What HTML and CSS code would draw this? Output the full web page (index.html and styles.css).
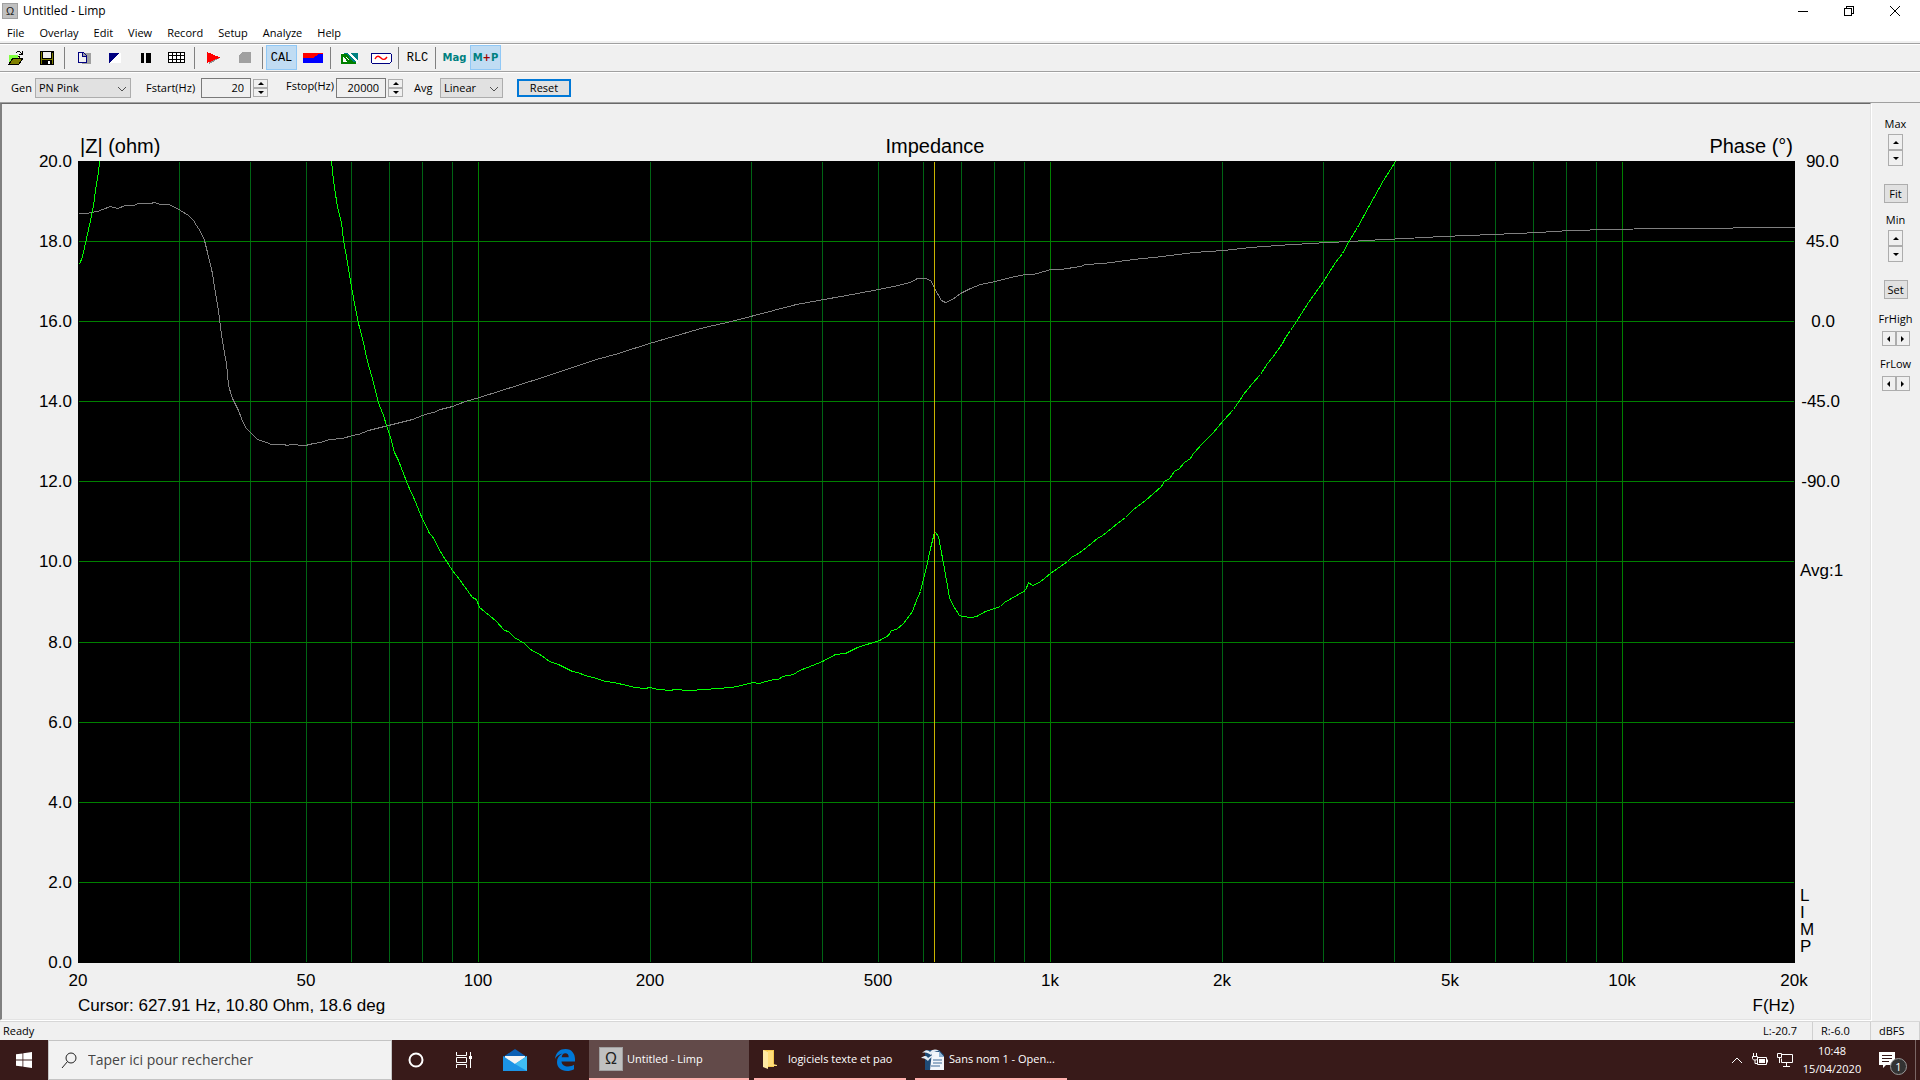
FILE: index.html
```
<!DOCTYPE html>
<html lang="en">
<head>
    <meta charset="UTF-8">
    <meta name="viewport" content="width=device-width, initial-scale=1.0">
    <title>Untitled - Limp</title>
    <link rel="stylesheet" href="styles.css">
</head>
<body>
    <header class="titlebar">
        <span class="app-icon">Ω</span>
        <span class="title">Untitled - Limp</span>
        <div class="window-buttons">
            <button aria-label="Minimize"><svg width="12" height="12"><path d="M1 6.500h10"/></svg></button>
            <button aria-label="Restore"><svg width="12" height="12"><path d="M1.500 3.500h7v7h-7zM3.500 3.500v-2h7v7h-2"/></svg></button>
            <button aria-label="Close"><svg width="12" height="12" class="smooth"><path d="M1 1l10 10M11 1L1 11"/></svg></button>
        </div>
    </header>

    <nav class="menu">
        <button>File</button>
        <button>Overlay</button>
        <button>Edit</button>
        <button>View</button>
        <button>Record</button>
        <button>Setup</button>
        <button>Analyze</button>
        <button>Help</button>
    </nav>

    <div class="toolbar">
        <button aria-label="Open">
            <svg width="16" height="14"><path d="M1 13V4h4l1 1h5v3" fill="#ffff80" stroke="#000"/><path d="M1 4h9v9H1z" fill="#80ff40"/><path d="M1 13l4-6h10l-4 6z" fill="#808000" stroke="#000"/><path d="M8 2c2-2 4-2 6 1m0-3v3h-3" fill="none" stroke="#000"/></svg>
        </button>
        <button aria-label="Save">
            <svg width="14" height="14"><path d="M0 0h14v14H0z" fill="#000"/><path d="M1 1h1v12H1zM12 2h1v11h-1zM2 8h10v1H2z" fill="#808000"/><path d="M3 1h8v6H3z" fill="#f0f0f0"/><path d="M8 10h2v3H8z" fill="#fff"/></svg>
        </button>
        <span class="sep"></span>
        <button aria-label="Copy">
            <svg width="14" height="13"><path d="M5 2h9v11H5z" fill="#a0a0a0"/><path d="M1 1h5l3 3v7H1zM5 1v4h4" fill="#f0f0f0" stroke="#000080"/></svg>
        </button>
        <button aria-label="Invert colors">
            <svg width="12" height="10"><path d="M0 0h12v10H0z" fill="#fff"/><path d="M0 0h11L0 10z" fill="#000080"/></svg>
        </button>
        <button aria-label="Line width">
            <svg width="10" height="10"><path d="M0 0h3v10H0zM5 0h5v10H5z" fill="#000"/></svg>
        </button>
        <button aria-label="Grid">
            <svg width="17" height="11"><path d="M0 0h17v11H0z" fill="#000"/><path d="M1 1h3v2H1zM5 1h3v2H5zM9 1h3v2H9zM13 1h3v2h-3zM1 4h3v3H1zM5 4h3v3H5zM9 4h3v3H9zM13 4h3v3h-3zM1 8h3v2H1zM5 8h3v2H5zM9 8h3v2H9zM13 8h3v2h-3z" fill="#fff"/></svg>
        </button>
        <span class="sep"></span>
        <button aria-label="Start recording">
            <svg width="14" height="12"><path d="M2 12V1l11 5z" fill="#909090"/><path d="M0 0l13 5.500L0 11z" fill="#f00"/></svg>
        </button>
        <button aria-label="Stop">
            <svg width="12" height="11"><path d="M3 0h9v11H0V3z" fill="#a0a0a0"/></svg>
        </button>
        <span class="sep"></span>
        <button class="mono on">CAL</button>
        <button aria-label="Overlay level">
            <svg width="20" height="10"><path d="M0 0h20v10H0z" fill="#00f"/><path d="M0 0h20v1h-4l-3 2-3 2H0z" fill="#f00"/></svg>
        </button>
        <span class="sep"></span>
        <button aria-label="Overlay set">
            <svg width="17" height="12"><path d="M0 1h17v10H0z" fill="#fff"/><path d="M3 1h4l8 9h-4zM9 1h8v8z" fill="#008080"/><path d="M1 2v9h14M1 2l8 9M4 2l8 9" fill="none" stroke="#008000" stroke-width="2"/></svg>
        </button>
        <button aria-label="Generator setup">
            <svg width="22" height="12"><rect x="1" y="1" width="20" height="10" rx="1" fill="#fff" stroke="#000080" stroke-width="1"/><path class="smooth" d="M5 7c2-4 4-3 6-1s4 2 6-1" fill="none" stroke="#f00" stroke-width="1.400"/></svg>
        </button>
        <span class="sep"></span>
        <button class="mono">RLC</button>
        <span class="sep"></span>
        <button class="mag">Mag</button>
        <button class="mag on">M<b>+</b>P</button>
    </div>

    <div class="controls">
        <label class="lbl-gen" for="gen">Gen</label>
        <span class="combo gen">
            <select id="gen"><option>PN Pink</option></select>
            <svg width="10" height="6"><path d="M1 1l4 4 4-4"/></svg>
        </span>
        <label class="lbl-start" for="fstart">Fstart(Hz)</label>
        <input id="fstart" type="text" value="20">
        <span class="spin">
            <button aria-label="Fstart up"><i class="up"></i></button>
            <button aria-label="Fstart down"><i class="down"></i></button>
        </span>
        <label class="lbl-stop" for="fstop">Fstop(Hz)</label>
        <input id="fstop" type="text" value="20000">
        <span class="spin">
            <button aria-label="Fstop up"><i class="up"></i></button>
            <button aria-label="Fstop down"><i class="down"></i></button>
        </span>
        <label class="lbl-avg" for="avg">Avg</label>
        <span class="combo avg">
            <select id="avg"><option>Linear</option></select>
            <svg width="10" height="6"><path d="M1 1l4 4 4-4"/></svg>
        </span>
        <button class="reset">Reset</button>
    </div>

    <main>
        <section class="chart">
            <svg viewBox="0 0 1868 915" role="img" aria-label="Impedance">
                <g class="heading">
                    <text x="78" y="49">|Z| (ohm)</text>
                    <text x="933" y="49" text-anchor="middle">Impedance</text>
                    <text x="1791" y="49" text-anchor="end">Phase (°)</text>
                </g>

                <g transform="translate(76 57)">
                    <rect width="1717" height="802"/>
                    <!-- minor frequency lines -->
                    <path class="minor" d="M101.500 1v800M172.500 1v800M228.500 1v800M273.500 1v800M311.500 1v800M344.500 1v800M374.500 1v800M572.500 1v800M673.500 1v800M744.500 1v800M800.500 1v800M845.500 1v800M883.500 1v800M916.500 1v800M946.500 1v800M1144.500 1v800M1245.500 1v800M1316.500 1v800M1372.500 1v800M1417.500 1v800M1455.500 1v800M1488.500 1v800M1518.500 1v800"/>
                    <!-- decades and ohm lines -->
                    <path class="major" d="M400.500 1v800M972.500 1v800M1544.500 1v800M1 80.500h1715M1 160.500h1715M1 240.500h1715M1 320.500h1715M1 400.500h1715M1 481.500h1715M1 561.500h1715M1 641.500h1715M1 721.500h1715"/>
                    <g transform="translate(.5 .5)">
                        <polyline class="phase" points="0,52 9,52 12,51 19,50 24,48 32,45 39,47 47,44 55,44 60,42 72,42 76,41 82,43 90,43 97,46 102,49 110,54 115,59 118,64 122,70 126,79 129,91 134,112 137,132 140,149 142,166 145,186 148,202 150,224 154,237 160,249 163,257 167,266 173,272 179,278 188,281 193,283 205,283 209,284 212,283 227,284 235,282 242,281 251,278 264,277 274,274 280,273 290,269 302,266 310,264 322,261 334,258 344,254 350,252 355,251 362,248 374,245 387,240 401,236 461,217 518,198 540,192 571,182 626,166 653,160 718,143 779,132 800,128 815,125 832,121 839,117 848,117 853,120 856,127 863,139 867,141 874,138 882,132 892,127 902,123 917,120 932,116 947,113 954,113 959,112 972,108 982,108 1002,105 1007,103 1025,102 1055,98 1084,95 1115,91 1145,89 1172,86 1199,84 1215,83 1249,81 1272,80 1287,79 1327,77 1364,75 1414,73 1460,71 1492,69 1532,68 1579,67 1654,67 1655,66 1716,66"/>
                        <polyline class="imp" points="1,103 4,95 8,77 12,59 15,44 17,29 20,11 21,0"/>
                        <polyline class="imp" points="253,0 255,19 259,46 263,61 265,79 269,101 273,126 277,147 280,162 285,181 288,196 291,207 294,217 298,234 301,244 305,254 309,267 312,276 316,291 320,299 325,312 330,325 336,338 342,353 351,372 354,375 363,392 374,409 381,418 394,436 398,438 401,446 406,450 417,459 426,469 430,470 436,476 446,482 452,488 463,494 471,500 480,503 494,510 499,511 507,514 518,517 527,520 535,521 549,524 556,526 567,527 571,526 580,528 592,529 596,528 610,529 628,528 638,527 653,526 663,524 674,521 681,522 687,520 696,518 700,518 704,515 715,513 721,509 729,506 744,500 757,493 767,492 779,486 801,479 810,474 813,469 818,468 825,462 834,450 838,439 842,430 846,414 849,401 852,387 856,371 857,371 860,375 862,386 865,402 868,419 871,436 874,443 881,454 884,455 893,456 898,455 907,450 922,445 926,441 947,429 950,421 954,424 961,421 972,412 989,400 993,396 1000,392 1008,386 1019,377 1024,374 1033,367 1039,362 1047,356 1055,348 1067,339 1075,332 1083,325 1086,320 1091,317 1096,310 1101,307 1106,301 1112,297 1115,292 1124,282 1134,272 1145,259 1155,248 1159,242 1162,238 1165,233 1174,222 1182,213 1189,202 1194,196 1204,182 1207,176 1212,169 1218,160 1230,141 1245,120 1257,101 1264,92 1271,79 1279,66 1285,55 1295,37 1305,19 1312,8 1317,0"/>
                    </g>
                    <path class="cursor" d="M856.500 1v800"/>
                </g>

                <g text-anchor="end">
                    <text x="70" y="63">20.0</text>
                    <text x="70" y="143">18.0</text>
                    <text x="70" y="223">16.0</text>
                    <text x="70" y="303">14.0</text>
                    <text x="70" y="383">12.0</text>
                    <text x="70" y="463">10.0</text>
                    <text x="70" y="544">8.0</text>
                    <text x="70" y="624">6.0</text>
                    <text x="70" y="704">4.0</text>
                    <text x="70" y="784">2.0</text>
                    <text x="70" y="864">0.0</text>
                </g>
                <g text-anchor="end">
                    <text x="1837" y="63">90.0</text>
                    <text x="1837" y="143">45.0</text>
                    <text x="1833" y="223">0.0</text>
                    <text x="1838" y="303">-45.0</text>
                    <text x="1838" y="383">-90.0</text>
                </g>
                <g>
                    <text x="1798" y="472">Avg:1</text>
                    <text x="1798" y="797">L</text>
                    <text x="1798" y="814">I</text>
                    <text x="1798" y="831">M</text>
                    <text x="1798" y="848">P</text>
                </g>
                <g text-anchor="middle">
                    <text x="76" y="882">20</text>
                    <text x="304" y="882">50</text>
                    <text x="476" y="882">100</text>
                    <text x="648" y="882">200</text>
                    <text x="876" y="882">500</text>
                    <text x="1048" y="882">1k</text>
                    <text x="1220" y="882">2k</text>
                    <text x="1448" y="882">5k</text>
                    <text x="1620" y="882">10k</text>
                    <text x="1792" y="882">20k</text>
                </g>
                <text x="76" y="907">Cursor: 627.91 Hz, 10.80 Ohm, 18.6 deg</text>
                <text x="1793" y="907" text-anchor="end">F(Hz)</text>
            </svg>
        </section>

        <aside class="scale">
            <span>Max</span>
            <div class="spin tall">
                <button aria-label="Max up"><i class="up"></i></button>
                <button aria-label="Max down"><i class="down"></i></button>
            </div>
            <button class="small">Fit</button>
            <span>Min</span>
            <div class="spin tall">
                <button aria-label="Min up"><i class="up"></i></button>
                <button aria-label="Min down"><i class="down"></i></button>
            </div>
            <button class="small">Set</button>
            <span class="freq">FrHigh</span>
            <div class="spin wide">
                <button aria-label="High frequency down"><i class="left"></i></button>
                <button aria-label="High frequency up"><i class="right"></i></button>
            </div>
            <span>FrLow</span>
            <div class="spin wide">
                <button aria-label="Low frequency down"><i class="left"></i></button>
                <button aria-label="Low frequency up"><i class="right"></i></button>
            </div>
        </aside>
    </main>

    <div class="status">
        <span class="ready">Ready</span>
        <span class="level">L:-20.7</span>
        <span class="level">R:-6.0</span>
        <span class="unit">dBFS</span>
    </div>

    <footer class="taskbar">
        <button class="start" aria-label="Start">
            <svg width="16" height="16"><path d="M0 2.300l6.500-.9v6.200H0zM7.300 1.300L16 0v7.600H7.300zM0 8.400h6.500v6.200L0 13.700zM7.300 8.400H16V16l-8.700-1.300z" fill="#fff"/></svg>
        </button>
        <div class="search">
            <svg width="16" height="17"><circle cx="10" cy="6" r="5"/><path d="M6.500 9.500L1 16"/></svg>
            <input type="text" aria-label="Search" placeholder="Taper ici pour rechercher">
        </div>
        <button class="icon" aria-label="Cortana">
            <svg width="16" height="16"><circle cx="8" cy="8" r="6.500" fill="none" stroke="#fff" stroke-width="2"/></svg>
        </button>
        <button class="icon" aria-label="Task view">
            <svg width="16" height="16"><path d="M.5 0v3.500h10V0M.5 16v-3.500h10V16M.5 5.500h10v5H.5zM14.500 0v16" fill="none" stroke="#fff"/><path d="M13 4h3v3h-3z" fill="#fff"/></svg>
        </button>
        <button class="mail" aria-label="Mail">
            <svg width="24" height="22"><path d="M0 8L12 0l12 8v5H0z" fill="#0a5fb4"/><path d="M2 7h20v8H2z" fill="#f4f4f4"/><path d="M0 7l12 8 12-8v15H0z" fill="#1c94e6"/><path d="M24 7v15L12 15z" fill="#40bdf2"/></svg>
        </button>
        <button class="edge" aria-label="Edge">
            <svg width="20" height="22"><path d="M0 10C1 3 5 0 10.500 0 17 0 20 5 20 10v2.500H6.500c.3 3.500 3 5 6.500 5 2.500 0 4.500-.7 6-1.700v4.400c-2 1.200-4.500 1.800-7 1.800-6 0-10-3.500-10-9 0-4 2.200-6.800 5.500-8.500C4 5.500 1.500 7 0 10zm6.700-1.700h7c0-2.500-1.200-4-3.400-4-2 0-3.300 1.500-3.600 4z" fill="#0078d7"/></svg>
        </button>
        <button class="task active">
            <span class="app-icon big">Ω</span>
            Untitled - Limp
        </button>
        <button class="task">
            <svg width="24" height="24"><path d="M3 3h11v17H3z" fill="#f5c84e"/><path d="M3 3l5 2v17l-5-2z" fill="#ffe9a2"/><path d="M8 4h5v13l4 1v1H8z" fill="#ffdc7a"/></svg>
            logiciels texte et pao
        </button>
        <button class="task writer">
            <svg width="24" height="24"><path d="M4 3h14l5 5v15H4z" fill="#1f4b77"/><path d="M11 5h7l5 5v13H9z" fill="#f2f6fa"/><path d="M18 4v6h5z" fill="#8fb3d3"/><path d="M12 13h9M12 16h9M10 19h9" stroke="#3c6a98" stroke-width="1"/><path d="M1 6c4-4 6-3 8-1 3-3 6-3 9-1-4 0-6 1-8 4-3-2-5-3-9-2zM0 11c4-3 6-2 7 0 3-3 6-3 8-2-4 0-6 2-8 5-2-2-4-3-7-3z" fill="#e4ecf4"/></svg>
            Sans nom 1 - Open...
        </button>
        <div class="tray">
            <svg width="12" height="8"><path d="M1 7l5-5 5 5"/></svg>
            <svg width="16" height="14"><path d="M5.500 4.500h9v7h-9z" /><path d="M7 6h6v4H7z" fill="#fff" stroke="none"/><path d="M15.500 6.500v3M1.500 0v3M4.500 0v3M.5 3.500h5v2c0 2-5 2-5 0zM3 7v3.500h2"/></svg>
            <svg width="16" height="14"><path d="M4.500 1.500h11v8h-11M4.500 9.500v-4M9.500 10v3M6 13.500h7M.5.5h4v4h-4zM2.500 5v5"/></svg>
            <div class="clock"><span>10:48</span><span>15/04/2020</span></div>
            <button class="notes" aria-label="Notifications">
                <svg width="16" height="16"><path d="M0 0h16v13H7l-3 3v-3H0z" fill="#fff" stroke="none"/><path d="M3 3.500h10M3 6.500h10M3 9.500h7" stroke="#361818"/></svg>
                <span class="badge">1</span>
            </button>
        </div>
    </footer>
</body>
</html>
```
FILE: styles.css
```
* {
    box-sizing: border-box;
}
body {
    margin: 0;
    height: 100vh;
    display: flex;
    flex-direction: column;
    overflow: hidden;
    background: #f0f0f0;
    color: #000;
    font-family: "Open Sans", sans-serif;
    font-size: 11px;
    line-height: 14px;
}
button, input, select {
    margin: 0;
    padding: 0;
    border: none;
    border-radius: 0;
    background: none;
    color: inherit;
    font: inherit;
}
svg {
    display: block;
    flex: none;
    shape-rendering: crispEdges;
}

/* title and menu */
.titlebar {
    display: flex;
    align-items: center;
    height: 22px;
    padding-left: 2px;
    background: #fff;
}
.title {
    font-size: 12px;
}
.app-icon {
    width: 16px;
    height: 16px;
    margin-right: 5px;
    border: 1px solid #a0a0a0;
    background: #c0c0c0;
    color: #222;
    font: 11px/14px "Liberation Sans", sans-serif;
    text-align: center;
}
.window-buttons {
    display: flex;
    margin-left: auto;
    padding-right: 2px;
}
.window-buttons button {
    display: flex;
    justify-content: center;
    align-items: center;
    width: 46px;
    height: 20px;
}
.window-buttons path {
    fill: none;
    stroke: #000;
}
.smooth {
    shape-rendering: auto;
}
.menu {
    display: flex;
    gap: 1px;
    height: 21px;
    background: #fff;
    border-bottom: 2px solid #f0f0f0;
}
.menu button {
    padding: 0 7px;
    height: 21px;
}

/* toolbar */
.toolbar {
    display: flex;
    height: 29px;
    border-top: 1px solid #a0a0a0;
    border-bottom: 1px solid #a0a0a0;
    box-shadow: inset 0 1px #fff, 0 1px #fff;
}
.toolbar button {
    display: flex;
    justify-content: center;
    align-items: center;
    width: 31px;
    height: 25px;
    margin-top: 1px;
}
.toolbar .sep {
    width: 1px;
    height: 22px;
    margin: 3px 3px 0 2px;
    background: #808080;
}
.toolbar .on {
    border: 1px solid #90c8f6;
    background: #c0dcf3;
}
.toolbar .mono {
    font: 12px/14px "Liberation Mono", monospace;
}
.toolbar .mag {
    color: #008080;
    font: bold 10px/14px "DejaVu Sans", sans-serif;
}
.mag b {
    color: #a00000;
}

/* generator controls */
.controls {
    display: flex;
    align-items: center;
    height: 31px;
    padding-top: 1px;
    border-bottom: 1px solid #a0a0a0;
}
.lbl-gen {
    width: 35px;
    padding-left: 11px;
}
.lbl-start {
    width: 70px;
    padding-left: 15px;
}
.lbl-stop {
    width: 68px;
    padding: 0 0 3px 18px;
}
.lbl-avg {
    width: 37px;
    padding-left: 11px;
}
.combo {
    position: relative;
}
.combo select {
    width: 100%;
    height: 20px;
    padding-left: 3px;
    border: 1px solid #adadad;
    background: #e1e1e1;
    appearance: none;
}
.combo svg {
    position: absolute;
    right: 4px;
    top: 8px;
    pointer-events: none;
    shape-rendering: auto;
}
.combo path {
    fill: none;
    stroke: #505050;
}
.gen {
    width: 96px;
}
.avg {
    width: 63px;
}
.controls input {
    width: 50px;
    height: 20px;
    padding-right: 6px;
    border: 1px solid #7a7a7a;
    text-align: right;
}
.spin {
    display: flex;
    flex-direction: column;
    width: 15px;
    margin-left: 2px;
}
.spin button {
    display: flex;
    justify-content: center;
    align-items: center;
    width: 15px;
    height: 9px;
    border: 1px solid #adadad;
}
.spin i {
    border: 3px solid transparent;
}
.spin .up {
    border-top: none;
    border-bottom-color: #000;
}
.spin .down {
    border-bottom: none;
    border-top-color: #000;
}
.spin .left {
    border-left: none;
    border-right-color: #000;
}
.spin .right {
    border-right: none;
    border-left-color: #000;
}
.reset {
    width: 54px;
    height: 18px;
    margin-left: 14px;
    border: 2px solid #0078d7;
    background: #e1e1e1;
    line-height: 14px;
}

/* chart */
main {
    flex: 1;
    min-height: 0;
    display: flex;
}
.chart {
    flex: 1;
    min-width: 0;
    border: 1px solid #e3e3e3;
    border-top-color: #696969;
    border-left: 2px solid #808080;
    box-shadow: 1px 1px #fff;
    margin: 0 1px 1px 0;
}
.chart svg {
    width: 100%;
    height: 100%;
}
.chart text {
    font: 17px "Liberation Sans", sans-serif;
}
.chart .heading text {
    font-size: 20px;
}
.chart path, .chart polyline {
    fill: none;
    stroke-width: 1px;
}
.minor {
    stroke: #006414;
}
.major {
    stroke: #008000;
}
.imp {
    stroke: #00ff00;
}
.phase {
    stroke: #808080;
}
.cursor {
    stroke: #c8b400;
}

/* scale buttons at the right */
.scale {
    display: flex;
    flex-direction: column;
    align-items: center;
    width: 48px;
    padding: 14px 1px 0 0;
}
.scale .spin {
    margin: 3px 0 18px;
}
.scale .tall button {
    height: 16px;
}
.scale .wide {
    flex-direction: row;
    width: 28px;
    margin: 5px 0 11px;
}
.scale .wide button {
    width: 14px;
    height: 15px;
}
.small {
    width: 24px;
    height: 19px;
    margin-bottom: 10px;
    border: 1px solid #adadad;
    background: #e1e1e1;
}
.freq {
    margin-top: 3px;
}

/* status line */
.status {
    display: flex;
    height: 19px;
    border-top: 1px solid #d7d7d7;
    line-height: 18px;
}
.ready {
    flex: 1;
    padding-left: 3px;
}
.level, .unit {
    width: 58px;
    padding-left: 8px;
    border-right: 1px solid #d0d0d0;
}
.unit {
    width: 49px;
}

/* taskbar */
.taskbar {
    display: flex;
    height: 40px;
    background: #381a19;
    color: #fff;
}
.taskbar button {
    display: flex;
    justify-content: center;
    align-items: center;
}
.taskbar svg {
    shape-rendering: auto;
}
.start, .icon {
    width: 48px;
}
.search {
    display: flex;
    align-items: center;
    gap: 11px;
    width: 344px;
    padding-left: 12px;
    border: 1px solid #c4c4c4;
    background: #f2f2f2;
}
.search svg {
    fill: none;
    stroke: #222;
}
.search input {
    flex: 1;
    font-size: 14px;
    line-height: 20px;
}
.search input::placeholder {
    color: #444;
    opacity: 1;
}
.mail {
    width: 54px;
}
.edge {
    width: 46px;
    margin-right: 1px;
}
.taskbar .task {
    justify-content: flex-start;
    gap: 4px;
    width: 152px;
    margin-right: 9px;
    padding: 0 0 0 6px;
    border-bottom: 2px solid #ffb0ae;
    white-space: nowrap;
}
.taskbar .active {
    width: 160px;
    margin-right: 5px;
    padding-left: 10px;
    background: #624a49;
}
.big {
    width: 24px;
    height: 24px;
    margin: 0;
    font-size: 16px;
    line-height: 22px;
}
.tray {
    display: flex;
    align-items: center;
    margin-left: auto;
    padding-right: 4px;
}
.tray svg {
    margin-right: 9px;
    fill: none;
    stroke: #fff;
}
.clock {
    display: flex;
    flex-direction: column;
    width: 60px;
    line-height: 18px;
    text-align: center;
}
.notes {
    position: relative;
    width: 54px;
    height: 40px;
    border-right: 1px solid #7a6665;
}
.badge {
    position: absolute;
    left: 28px;
    top: 18px;
    width: 17px;
    height: 17px;
    border: 1px solid #999;
    border-radius: 50%;
    background: #333;
    line-height: 15px;
}
.taskbar .notes {
    padding-left: 6px;
}
```
